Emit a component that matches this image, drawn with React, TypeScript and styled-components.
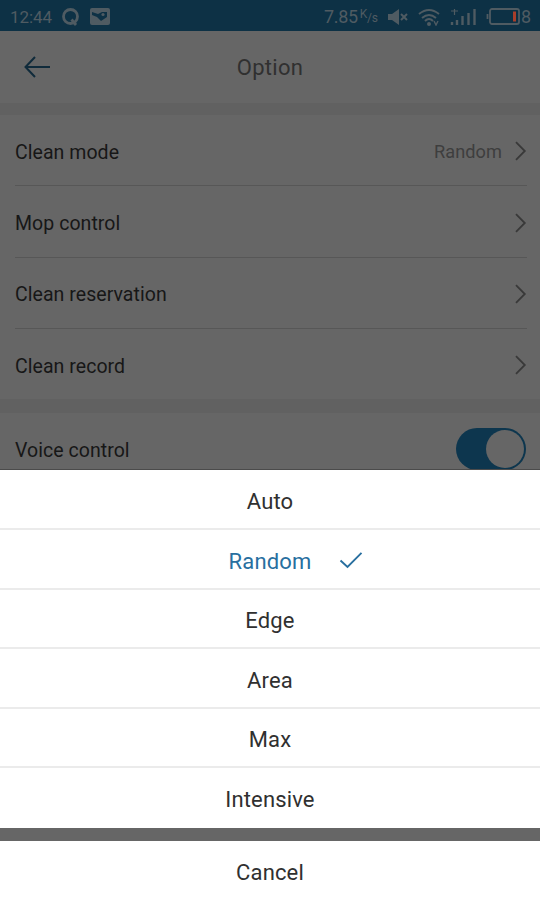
import React from "react";
import styled, { createGlobalStyle } from "styled-components";

const GlobalStyle = createGlobalStyle`
  * { box-sizing: border-box; }
  body { margin: 0; background: #666; font-family: Roboto, "Noto Sans", sans-serif; }
`;

const Screen = styled.div`
  position: relative;
  width: 540px;
  height: 900px;
  overflow: hidden;
  background: #666;
`;

const StatusBar = styled.div`
  display: flex;
  align-items: center;
  justify-content: space-between;
  height: 31px;
  padding: 2px 9px 0 10px;
  background: #0d3145;
  color: #4f5b62;
  font-size: 18px;
`;

const StatusGroup = styled.div<{ $gap: number }>`
  display: flex;
  align-items: center;
  gap: ${(p) => p.$gap}px;
  svg { display: block; }
`;

const Clock = styled.span`
  width: 42px;
  font-size: 17px;
  letter-spacing: -0.1px;
  white-space: nowrap;
`;

const Speed = styled.span`
  display: flex;
  width: 54px;
  letter-spacing: -0.3px;
`;

const Unit = styled.span`
  display: flex;
  padding-left: 2px;
  font-size: 12px;
  line-height: 16px;
  span:last-child { padding-top: 4px; }
`;

const Header = styled.header`
  display: grid;
  grid-template-columns: 60px 1fr 60px;
  align-items: center;
  height: 72px;
  text-align: center;
  color: #303030;
  font-size: 22px;
  letter-spacing: 0.3px;
  svg { display: block; margin-left: 23px; }
`;

const Divider = styled.div<{ $height: number }>`
  height: ${(p) => p.$height}px;
  background: #616161;
`;

const Settings = styled.div`
  padding: 0 13px 0 15px;
`;

const Setting = styled.div<{ $last?: boolean }>`
  display: flex;
  align-items: center;
  height: ${(p) => (p.$last ? 70 : 71.4)}px;
  padding-top: 2px;
  border-bottom: ${(p) => (p.$last ? "0" : "1px solid #575757")};
  color: #171717;
  font-size: 19.5px;
  letter-spacing: 0.05px;
  svg { display: block; }
`;

const Label = styled.span`
  padding-top: 2px;
`;

const Value = styled.span`
  margin-left: auto;
  margin-right: 12px;
  padding-top: 1px;
  color: #3e3e3e;
  font-size: 18.2px;
`;

const ChevronBox = styled.span`
  margin-left: auto;
  ${Value} + & { margin-left: 0; }
`;

const Toggle = styled.span`
  display: flex;
  justify-content: flex-end;
  width: 70px;
  height: 42px;
  margin-left: auto;
  margin-right: 1px;
  padding: 2px;
  border-radius: 21px;
  background: #0d364e;
`;

const Knob = styled.span`
  width: 38px;
  height: 38px;
  border-radius: 50%;
  background: #666;
`;

const Sheet = styled.div`
  position: absolute;
  left: 0;
  right: 0;
  bottom: 0;
  display: flex;
  flex-direction: column;
  gap: 13px;
  background: #666;
  border-top: 1px solid #4b4b4b;
`;

const Choices = styled.div`
  display: grid;
  grid-template-rows: 60.4px repeat(5, 59.5px);
  height: 358px;
  background: #fff;
`;

const Choice = styled.div<{ $selected?: boolean }>`
  display: grid;
  grid-template-columns: 1fr auto 1fr;
  align-items: center;
  padding-top: 4px;
  border-bottom: 2px solid #ebebeb;
  color: ${(p) => (p.$selected ? "#286f9f" : "#303030")};
  font-size: 22px;
  letter-spacing: 0.15px;
  &:last-child { border-bottom-color: transparent; }
  span { grid-column: 2; }
  svg { display: block; margin-left: 28px; }
`;

const Cancel = styled(Choice)`
  height: 59px;
  padding-top: 5px;
  background: #fff;
`;

const Chevron = () => (
  <svg width="13" height="20" viewBox="0 0 13 20" fill="none" stroke="#393939" strokeWidth="1.8">
    <path d="M2 1.2 L10.8 10 L2 18.8" />
  </svg>
);

const BackArrow = () => (
  <svg width="28" height="22" viewBox="0 0 28 22" fill="none" stroke="#102b3b" strokeWidth="2">
    <path d="M12 1 L2.5 11 L12 21 M2.5 11 H27" />
  </svg>
);

const CheckMark = () => (
  <svg width="24" height="18" viewBox="0 0 24 18" fill="none" stroke="#286f9f" strokeWidth="1.9">
    <path d="M1.5 8.5 L8.5 15 L22.5 0.8" />
  </svg>
);

const settings = [
  { label: "Clean mode", value: "Random" },
  { label: "Mop control" },
  { label: "Clean reservation" },
  { label: "Clean record" },
];

const choices = ["Auto", "Random", "Edge", "Area", "Max", "Intensive"];

export default function App() {
  return (
    <Screen>
      <GlobalStyle />
      <StatusBar>
        <StatusGroup $gap={9}>
          <Clock>12:44</Clock>
          <svg width="20" height="18" viewBox="0 0 20 18" fill="none" stroke="#4f5b62" strokeWidth="2.8">
            <circle cx="9.5" cy="8.5" r="7" />
            <path d="M10.5 11.5 L15 17" />
          </svg>
          <svg width="20" height="17" viewBox="0 0 20 17">
            <rect width="20" height="17" rx="2" fill="#4f5b62" />
            <path d="M2 4 L8 6 L12 4 H17 V9 L11 13 L7 9 L2 7 Z" fill="#0d3145" />
            <circle cx="13" cy="6.5" r="1.6" fill="#4f5b62" />
          </svg>
        </StatusGroup>
        <StatusGroup $gap={10}>
          <Speed>7.85<Unit><span>K</span><span>/s</span></Unit></Speed>
          <svg width="20" height="18" viewBox="0 0 20 18">
            <path d="M0 6 H4 L11 1 V17 L4 12 H0 Z" fill="#4f5b62" />
            <path d="M13 6 L19 12 M19 6 L13 12" stroke="#4f5b62" strokeWidth="2" />
          </svg>
          <svg width="22" height="18" viewBox="0 0 22 18" fill="none" stroke="#4f5b62" strokeWidth="2">
            <path d="M1 6 Q11 -2 21 6 M4 10 Q11 4 18 10 M7 13 Q11 9 15 13" />
            <circle cx="11" cy="16" r="1" fill="#4f5b62" />
            <path d="M16 13 L18 17 L20 13" strokeWidth="1.4" />
          </svg>
          <svg width="26" height="18" viewBox="0 0 26 18" fill="none" stroke="#4f5b62" strokeWidth="2.4">
            <path d="M2 17 V14 M7 17 V12 M12.5 17 V8 M18.5 17 V5 M24.5 17 V1" />
            <path d="M1 3 H8 M4.5 1 V7" strokeWidth="1.2" />
          </svg>
          <StatusGroup $gap={1}>
            <svg width="34" height="17" viewBox="0 0 34 17" fill="none" stroke="#4f5b62" strokeWidth="1.8">
              <rect x="4" y="1" width="29" height="15" rx="2" />
              <path d="M1.5 6 V11" />
              <path d="M28.5 3.5 V13.5" stroke="#a93e2b" strokeWidth="3" />
            </svg>
            <span>8</span>
          </StatusGroup>
        </StatusGroup>
      </StatusBar>
      <Header>
        <BackArrow />
        <span>Option</span>
      </Header>
      <Divider $height={12} />
      <Settings>
        {settings.map((item, index) => (
          <Setting key={item.label} $last={index === settings.length - 1}>
            <Label>{item.label}</Label>
            {item.value && <Value>{item.value}</Value>}
            <ChevronBox><Chevron /></ChevronBox>
          </Setting>
        ))}
      </Settings>
      <Divider $height={14} />
      <Settings>
        <Setting $last>
          <Label>Voice control</Label>
          <Toggle><Knob /></Toggle>
        </Setting>
      </Settings>
      <Sheet>
        <Choices>
          {choices.map((name) => (
            <Choice key={name} $selected={name === "Random"}>
              <span>{name}</span>
              {name === "Random" && <CheckMark />}
            </Choice>
          ))}
        </Choices>
        <Cancel><span>Cancel</span></Cancel>
      </Sheet>
    </Screen>
  );
}
